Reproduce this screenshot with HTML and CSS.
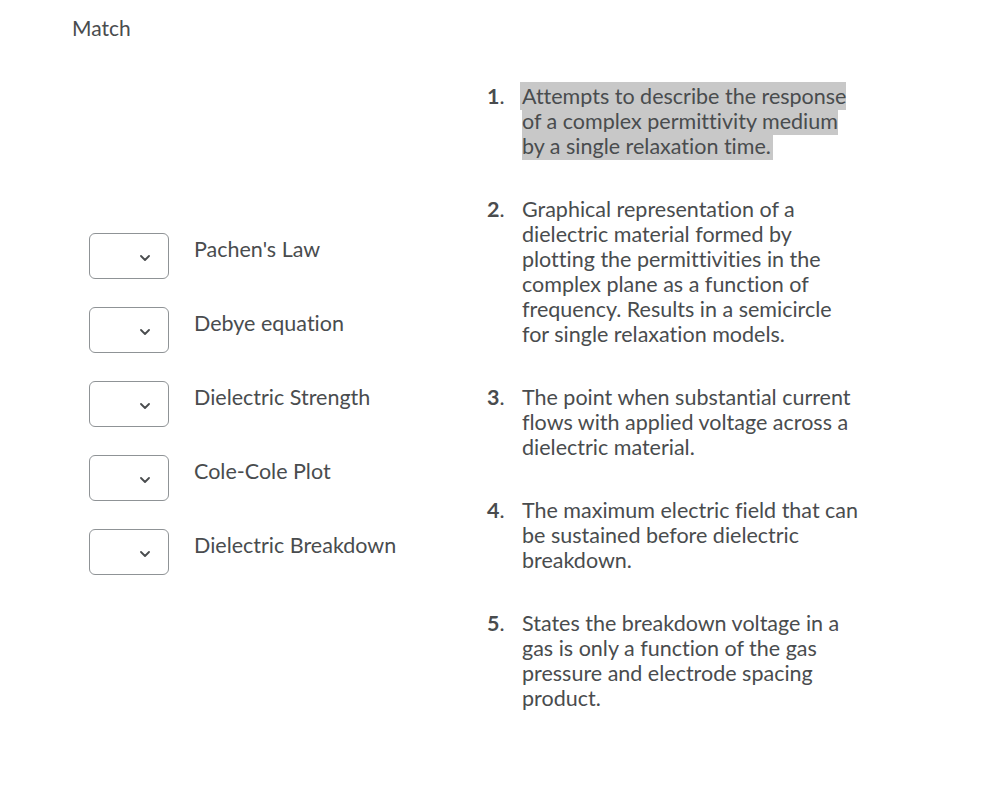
FILE: index.html
```html
<!DOCTYPE html>
<html>
<head>
<meta charset="utf-8">
<link rel="stylesheet" href="styles.css">
</head>
<body>
<div class="page">
  <div class="title">Match</div>
  <div class="match">
    <div class="choices">
      <div class="row"><div class="sel"><svg viewBox="0 0 10 6" width="10" height="6"><path d="M1 1 L5 5 L9 1" fill="none" stroke="#494c4e" stroke-width="1.8" stroke-linecap="round" stroke-linejoin="round"/></svg></div><div class="label">Pachen's Law</div></div>
      <div class="row"><div class="sel"><svg viewBox="0 0 10 6" width="10" height="6"><path d="M1 1 L5 5 L9 1" fill="none" stroke="#494c4e" stroke-width="1.8" stroke-linecap="round" stroke-linejoin="round"/></svg></div><div class="label">Debye equation</div></div>
      <div class="row"><div class="sel"><svg viewBox="0 0 10 6" width="10" height="6"><path d="M1 1 L5 5 L9 1" fill="none" stroke="#494c4e" stroke-width="1.8" stroke-linecap="round" stroke-linejoin="round"/></svg></div><div class="label">Dielectric Strength</div></div>
      <div class="row"><div class="sel"><svg viewBox="0 0 10 6" width="10" height="6"><path d="M1 1 L5 5 L9 1" fill="none" stroke="#494c4e" stroke-width="1.8" stroke-linecap="round" stroke-linejoin="round"/></svg></div><div class="label">Cole-Cole Plot</div></div>
      <div class="row"><div class="sel"><svg viewBox="0 0 10 6" width="10" height="6"><path d="M1 1 L5 5 L9 1" fill="none" stroke="#494c4e" stroke-width="1.8" stroke-linecap="round" stroke-linejoin="round"/></svg></div><div class="label">Dielectric Breakdown</div></div>
    </div>
    <ol class="defs">
      <li><span class="num"><b>1</b>.</span><span class="txt"><span class="hl">Attempts to describe the response of a complex permittivity medium by a single relaxation time.</span></span></li>
      <li><span class="num"><b>2</b>.</span><span class="txt">Graphical representation of a dielectric material formed by plotting the permittivities in the complex plane as a function of frequency. Results in a semicircle for single relaxation models.</span></li>
      <li><span class="num"><b>3</b>.</span><span class="txt">The point when substantial current flows with applied voltage across a dielectric material.</span></li>
      <li><span class="num"><b>4</b>.</span><span class="txt">The maximum electric field that can be sustained before dielectric breakdown.</span></li>
      <li><span class="num"><b>5</b>.</span><span class="txt">States the breakdown voltage in a gas is only a function of the gas pressure and electrode spacing product.</span></li>
    </ol>
  </div>
</div>
</body>
</html>
```

FILE: styles.css
```css
html, body {
  margin: 0;
  padding: 0;
  background: #ffffff;
}
body {
  font-family: Lato, "Liberation Sans", sans-serif;
  color: #494c4e;
  font-variant-ligatures: none;
}
.page {
  padding: 14px 0 0 72px;
}
.title {
  font-size: 21px;
  line-height: 28px;
}
.match {
  display: flex;
  align-items: flex-start;
  margin-top: 42px;
}
.choices {
  box-sizing: border-box;
  width: 415px;
  flex: none;
  padding-top: 149px;
  padding-left: 17px;
  display: flex;
  flex-direction: column;
  gap: 28px;
}
.row {
  display: flex;
  align-items: flex-start;
}
.sel {
  box-sizing: border-box;
  width: 80px;
  height: 46px;
  border: 1px solid #8f9396;
  border-radius: 6px;
  display: flex;
  align-items: center;
  justify-content: flex-end;
  padding-right: 18px;
  padding-top: 3px;
}
.sel svg {
  display: block;
}
.label {
  margin-left: 25px;
  font-size: 21.5px;
  line-height: 25px;
  padding-top: 4px;
}
.defs {
  list-style: none;
  margin: 0;
  padding: 0;
  width: 376px;
  display: flex;
  flex-direction: column;
  gap: 38px;
}
.defs li {
  display: flex;
  font-size: 21.5px;
  line-height: 25px;
}
.num {
  flex: none;
  width: 35px;
}
.num b {
  font-weight: 700;
}
.txt {
  flex: none;
  width: 340px;
}
.hl {
  background: #c8c8c8;
  padding: 1px 2px;
  margin-left: -2px;
}
```
